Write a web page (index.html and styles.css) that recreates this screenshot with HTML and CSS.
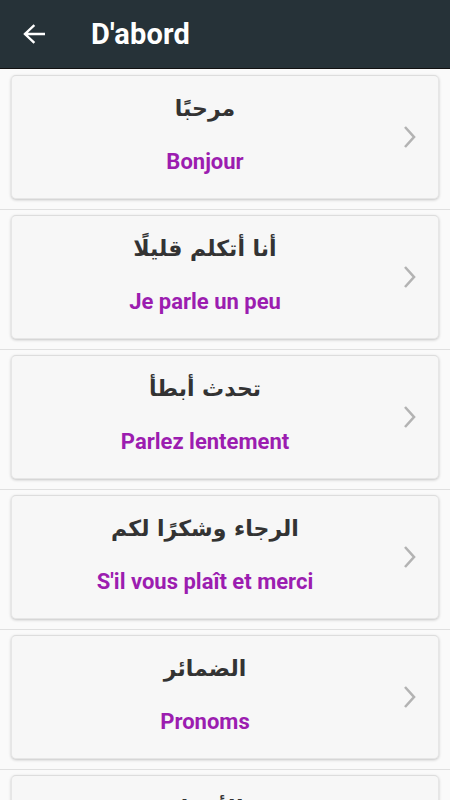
FILE: index.html
```html
<!DOCTYPE html>
<html lang="fr">
<head>
    <meta charset="UTF-8">
    <meta name="viewport" content="width=device-width, initial-scale=1.0">
    <title>D'abord</title>
    <link rel="stylesheet" href="styles.css">
</head>
<body>
    <header class="toolbar">
        <button class="back-btn" aria-label="Retour">
            <svg width="22" height="20" viewBox="0 0 22 20"><path d="M21 10H2.5M10.5 2L2 10l8.5 8" fill="none" stroke="#fff" stroke-width="2.4" stroke-linecap="square"/></svg>
        </button>
        <h1 class="toolbar-title">D'abord</h1>
    </header>
    <ul class="phrase-list">
        <li class="phrase-row">
            <div class="card">
                <div class="card-text">
                    <p class="ar" dir="rtl">مرحبًا</p>
                    <p class="fr">Bonjour</p>
                </div>
                <div class="chevron"><svg width="14" height="24" viewBox="0 0 14 24"><path d="M2 2l9 10-9 10" fill="none" stroke="#b3b3b3" stroke-width="2.6"/></svg></div>
            </div>
        </li>
        <li class="phrase-row">
            <div class="card">
                <div class="card-text">
                    <p class="ar" dir="rtl">أنا أتكلم قليلًا</p>
                    <p class="fr">Je parle un peu</p>
                </div>
                <div class="chevron"><svg width="14" height="24" viewBox="0 0 14 24"><path d="M2 2l9 10-9 10" fill="none" stroke="#b3b3b3" stroke-width="2.6"/></svg></div>
            </div>
        </li>
        <li class="phrase-row">
            <div class="card">
                <div class="card-text">
                    <p class="ar" dir="rtl">تحدث أبطأ</p>
                    <p class="fr">Parlez lentement</p>
                </div>
                <div class="chevron"><svg width="14" height="24" viewBox="0 0 14 24"><path d="M2 2l9 10-9 10" fill="none" stroke="#b3b3b3" stroke-width="2.6"/></svg></div>
            </div>
        </li>
        <li class="phrase-row">
            <div class="card">
                <div class="card-text">
                    <p class="ar" dir="rtl">الرجاء وشكرًا لكم</p>
                    <p class="fr">S'il vous plaît et merci</p>
                </div>
                <div class="chevron"><svg width="14" height="24" viewBox="0 0 14 24"><path d="M2 2l9 10-9 10" fill="none" stroke="#b3b3b3" stroke-width="2.6"/></svg></div>
            </div>
        </li>
        <li class="phrase-row">
            <div class="card">
                <div class="card-text">
                    <p class="ar" dir="rtl">الضمائر</p>
                    <p class="fr">Pronoms</p>
                </div>
                <div class="chevron"><svg width="14" height="24" viewBox="0 0 14 24"><path d="M2 2l9 10-9 10" fill="none" stroke="#b3b3b3" stroke-width="2.6"/></svg></div>
            </div>
        </li>
        <li class="phrase-row">
            <div class="card">
                <div class="card-text">
                    <p class="ar" dir="rtl">الأسئلة</p>
                    <p class="fr">Questions</p>
                </div>
                <div class="chevron"><svg width="14" height="24" viewBox="0 0 14 24"><path d="M2 2l9 10-9 10" fill="none" stroke="#b3b3b3" stroke-width="2.6"/></svg></div>
            </div>
        </li>
    </ul>
</body>
</html>
```
FILE: styles.css
```css
body {
    margin: 0;
    font-family: Roboto, "Noto Sans", sans-serif;
    background-color: #fafafa;
}
.toolbar {
    display: flex;
    align-items: center;
    height: 68px;
    background-color: #263238;
    border-bottom: 1px solid #111;
}
.back-btn {
    display: flex;
    align-items: center;
    justify-content: center;
    width: 22px;
    height: 20px;
    margin-left: 23px;
    padding: 0;
    background: none;
    border: none;
}
.toolbar-title {
    margin: 0 0 0 46px;
    color: white;
    font-size: 29px;
    font-weight: 700;
    letter-spacing: 0.2px;
}
.phrase-list {
    list-style: none;
    margin: 0;
    padding: 0;
}
.phrase-row {
    padding: 6px 11px 10px;
    border-bottom: 1px solid #e0e0e0;
}
.phrase-row + .phrase-row {
    padding-top: 5px;
}
.card {
    display: flex;
    align-items: center;
    height: 122px;
    background-color: #f7f7f7;
    border-radius: 5px;
    border: 1px solid #e6e6e6;
    border-top-color: #ddd;
    box-shadow: 0 1px 3px rgba(0,0,0,0.22);
}
.card-text {
    flex: 1;
    display: flex;
    flex-direction: column;
    align-items: center;
}
.ar {
    margin: 0;
    font-family: "DejaVu Sans", sans-serif;
    font-size: 22px;
    font-weight: 700;
    color: #333;
    line-height: 34px;
    margin-top: -8px;
}
.fr {
    margin: 23px 0 0;
    font-size: 22px;
    font-weight: 700;
    color: #9c1db0;
    line-height: 26px;
}
.chevron {
    width: 40px;
    display: flex;
    padding-left: 5px;
    box-sizing: border-box;
}
```
